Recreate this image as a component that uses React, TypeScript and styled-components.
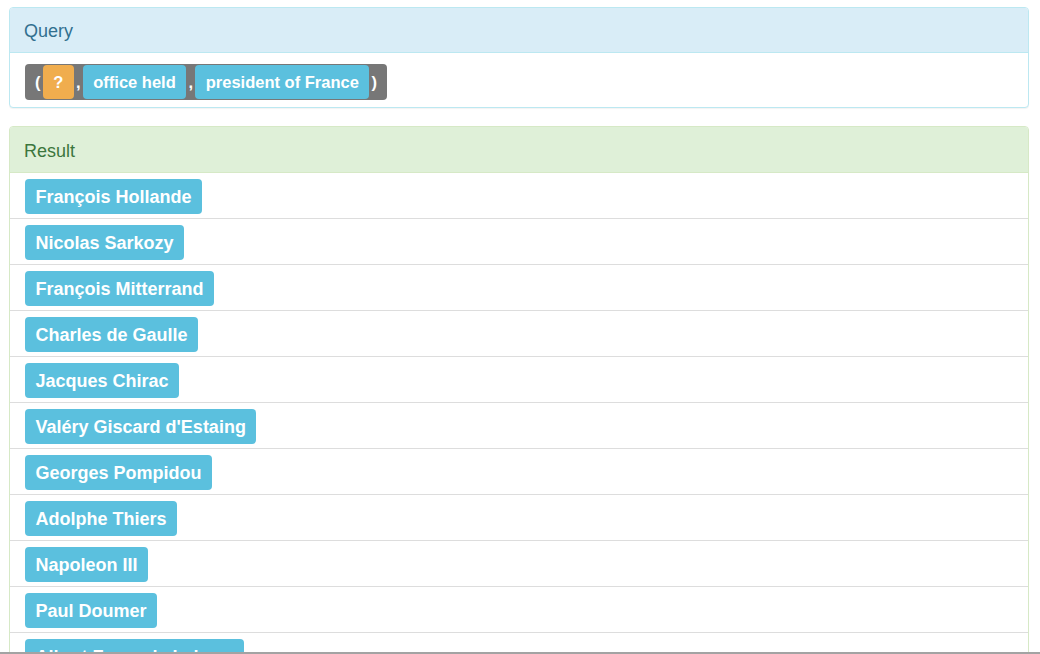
import React from "react";
import styled, { createGlobalStyle } from "styled-components";

const Global = createGlobalStyle`
  html, body { overflow: hidden; }
  body {
    margin: 7px 11px 0 9px;
    font-family: "Liberation Sans", Arial, Helvetica, sans-serif;
    color: #333;
    background: #fff;
  }
`;

const Panel = styled.div<{ $border: string }>`
  border: 1px solid ${(p) => p.$border};
  border-radius: 4px;
  margin-bottom: 18px;
  background: #fff;
  box-shadow: 0 1px 1px rgba(0, 0, 0, 0.05);
`;

const Heading = styled.div<{ $bg: string; $color: string; $border: string; $h: number }>`
  height: ${(p) => p.$h}px;
  box-sizing: border-box;
  display: flex;
  align-items: center;
  padding: 3px 14px 0;
  font-size: 18px;
  background: ${(p) => p.$bg};
  color: ${(p) => p.$color};
  border-bottom: 1px solid ${(p) => p.$border};
  border-radius: 3px 3px 0 0;
`;

const QueryBody = styled.div`
  padding: 11px 15px 7px;
`;

const Triple = styled.div`
  display: inline-flex;
  align-items: center;
  height: 36px;
  padding: 0 10px;
  background: #777;
  border-radius: 4px;
  color: #fff;
  font-weight: bold;
  font-size: 16.5px;
`;

const Punct = styled.span`
  line-height: 1;
  padding-top: 1px;
`;

const Tag = styled.span<{ $bg: string }>`
  display: inline-flex;
  align-items: center;
  box-sizing: border-box;
  height: 34px;
  margin: 0 2.2px;
  padding: 1px 10.5px 0;
  border-radius: 4px;
  background: ${(p) => p.$bg};
  color: #fff;
  font-weight: bold;
  font-size: 16.5px;
  white-space: nowrap;
`;

const List = styled.ul`
  list-style: none;
  margin: 0;
  padding: 0;
`;

const Row = styled.li`
  padding: 6px 15px 4px;
  height: 35px;
  border-bottom: 1px solid #ddd;
`;

const Entity = styled.span`
  display: inline-flex;
  align-items: center;
  box-sizing: border-box;
  height: 35px;
  padding: 1px 10.5px 0;
  border-radius: 4px;
  background: #5bc0de;
  color: #fff;
  font-weight: bold;
  font-size: 18px;
  white-space: nowrap;
`;

const BottomEdge = styled.div`
  position: fixed;
  left: 0;
  right: 0;
  bottom: 0;
  height: 2px;
  background: #a3a3a3;
`;

const results = [
  "François Hollande",
  "Nicolas Sarkozy",
  "François Mitterrand",
  "Charles de Gaulle",
  "Jacques Chirac",
  "Valéry Giscard d'Estaing",
  "Georges Pompidou",
  "Adolphe Thiers",
  "Napoleon III",
  "Paul Doumer",
  "Albert François Lebrun",
  "Vincent Auriol",
  "René Coty",
];

export default function App() {
  return (
    <>
      <Global />
      <Panel $border="#bce8f1">
        <Heading $bg="#d9edf7" $color="#31708f" $border="#bce8f1" $h={45}>
          Query
        </Heading>
        <QueryBody>
          <Triple>
            <Punct>(</Punct>
            <Tag $bg="#f0ad4e">?</Tag>
            <Punct>,</Punct>
            <Tag $bg="#5bc0de">office held</Tag>
            <Punct>,</Punct>
            <Tag $bg="#5bc0de">president of France</Tag>
            <Punct>)</Punct>
          </Triple>
        </QueryBody>
      </Panel>
      <Panel $border="#d6e9c6">
        <Heading $bg="#dff0d8" $color="#3c763d" $border="#d6e9c6" $h={46}>
          Result
        </Heading>
        <List>
          {results.map((r) => (
            <Row key={r}>
              <Entity>{r}</Entity>
            </Row>
          ))}
        </List>
      </Panel>
      <BottomEdge />
    </>
  );
}
